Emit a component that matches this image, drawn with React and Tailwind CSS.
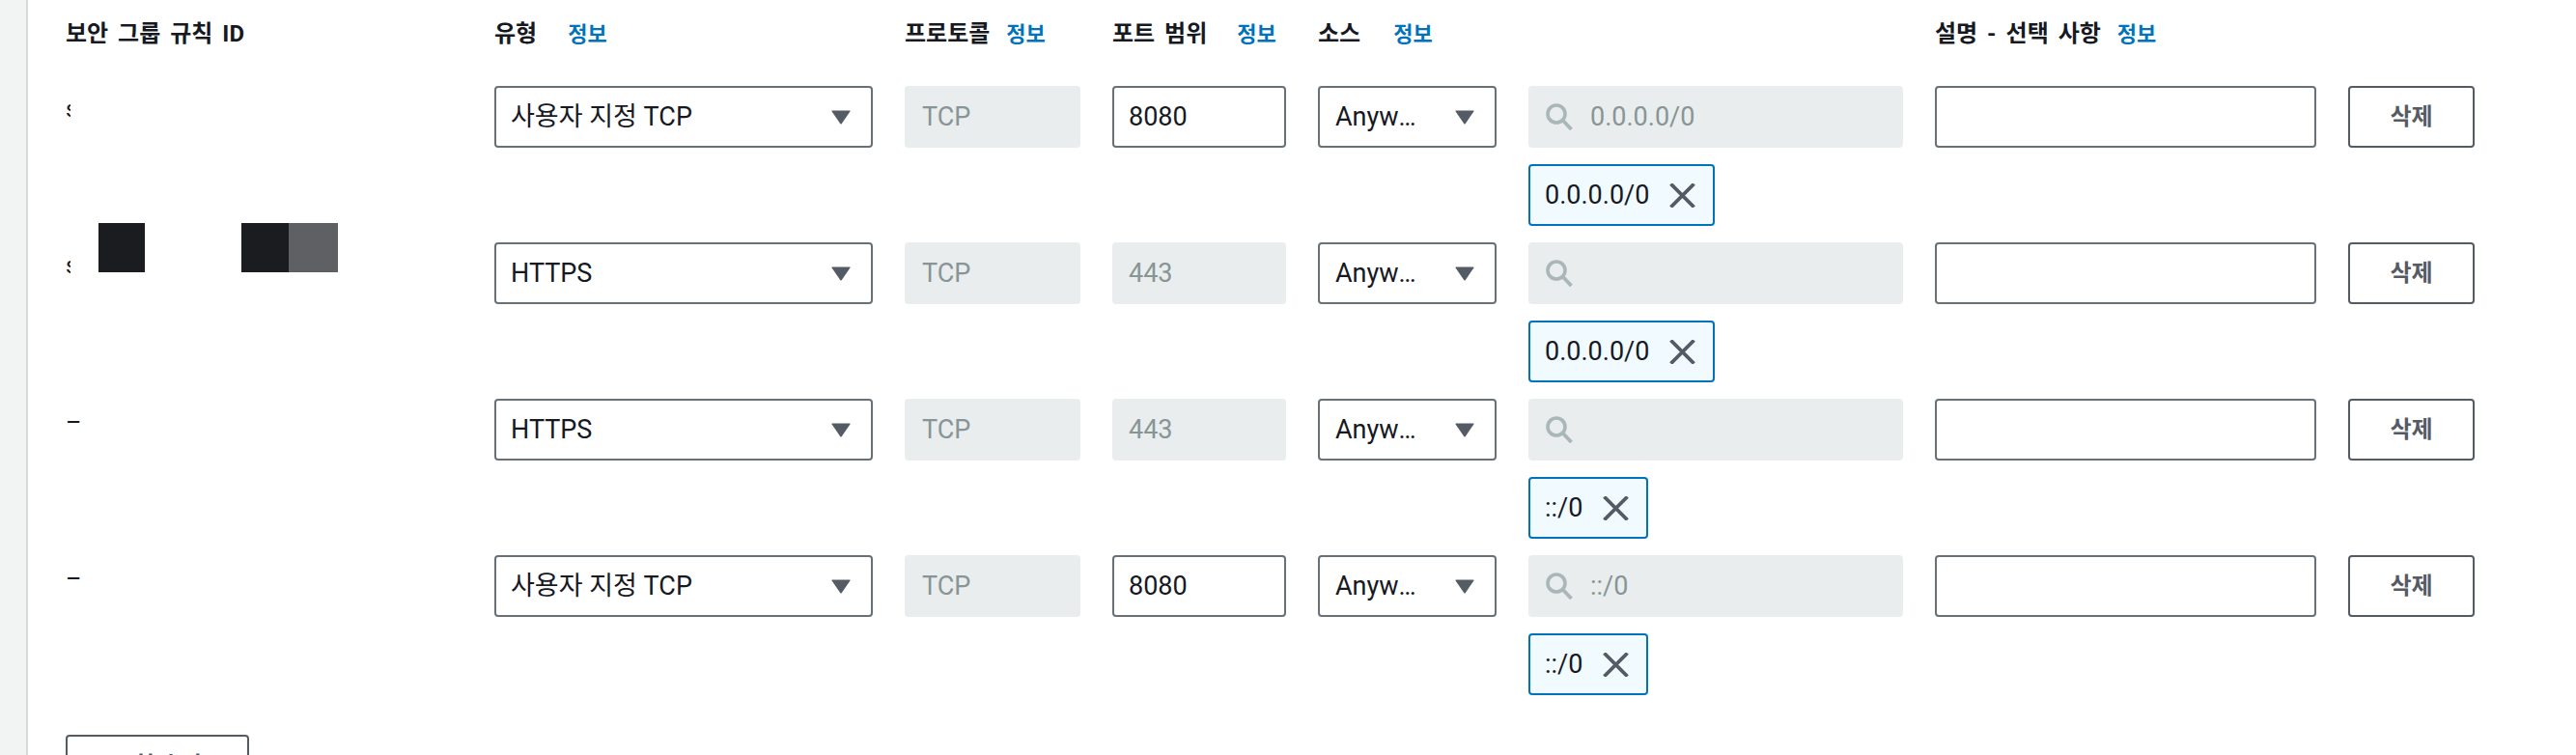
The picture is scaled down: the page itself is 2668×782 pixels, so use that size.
import React from 'react';

const rules = [
  { id: 'sliver', type: '사용자 지정 TCP', port: '8080', portEditable: true, source: 'Anywhere-IPv4', search: '0.0.0.0/0', chip: '0.0.0.0/0' },
  { id: 'redacted', type: 'HTTPS', port: '443', portEditable: false, source: 'Anywhere-IPv4', search: '', chip: '0.0.0.0/0' },
  { id: 'dash', type: 'HTTPS', port: '443', portEditable: false, source: 'Anywhere-IPv6', search: '', chip: '::/0' },
  { id: 'dash', type: '사용자 지정 TCP', port: '8080', portEditable: true, source: 'Anywhere-IPv6', search: '::/0', chip: '::/0' },
];

const Caret = () => (
  <svg width="20" height="15" viewBox="0 0 20 15" className="shrink-0">
    <path d="M1 0.5 H19 Q20 0.5 19.4 1.5 L10.8 14 Q10 15 9.2 14 L0.6 1.5 Q0 0.5 1 0.5 Z" fill="#545b64" />
  </svg>
);

const SearchIcon = () => (
  <svg width="30" height="28" viewBox="0 0 30 28" className="shrink-0">
    <circle cx="12" cy="11" r="9" fill="none" stroke="#aab7b8" strokeWidth="3.6" />
    <path d="M18.5 17.5 L27.5 27" stroke="#aab7b8" strokeWidth="3.8" />
  </svg>
);

const CloseIcon = () => (
  <svg width="27" height="25" viewBox="0 0 27 25" className="shrink-0">
    <path d="M1.5 0.5 L25.5 24.5 M25.5 0.5 L1.5 24.5" stroke="#545b64" strokeWidth="3.8" />
  </svg>
);

const Header = ({ label, gap }) => (
  <div className="flex items-baseline whitespace-nowrap">
    <span className="text-[24px] font-bold text-[#16191f] [word-spacing:4px]">{label}</span>
    {gap != null && (
      <span className={`text-[22px] font-bold text-[#0073bb] ${gap}`}>정보</span>
    )}
  </div>
);

const IdCell = ({ kind }) => {
  if (kind === 'dash') {
    return <div className="pt-[7px] text-[25px] leading-[36px] text-[#16191f]">–</div>;
  }
  return (
    <div className="relative pt-[6px] text-[24px] leading-[36px] text-[#16191f]">
      <div className="w-[5px] overflow-hidden">s</div>
      {kind === 'redacted' && (
        <>
          <div className="absolute left-[34px] top-[-20px] h-[51px] w-[48px] bg-[#1b1c20]" />
          <div className="absolute left-[182px] top-[-20px] flex h-[51px]">
            <div className="w-[49px] bg-[#1b1c20]" />
            <div className="w-[51px] bg-[#5f6064]" />
          </div>
        </>
      )}
    </div>
  );
};

const RuleRow = ({ rule }) => (
  <div className="grid grid-cols-[411px_392px_182px_180px_185px_388px_395px_131px] gap-x-[33px] items-start">
    <IdCell kind={rule.id} />

    <div className="flex h-[64px] items-center justify-between rounded-[4px] border-2 border-[#687078] bg-white pl-[15px] pr-[21px] text-[27px] text-[#16191f]">
      <span>{rule.type}</span>
      <Caret />
    </div>

    <div className="flex h-[64px] items-center rounded-[4px] border-2 border-[#eaeded] bg-[#eaeded] pl-[16px] text-[27px] text-[#879596]">
      TCP
    </div>

    {rule.portEditable ? (
      <div className="flex h-[64px] items-center rounded-[4px] border-2 border-[#687078] bg-white pl-[15px] text-[27px] text-[#16191f]">
        {rule.port}
      </div>
    ) : (
      <div className="flex h-[64px] items-center rounded-[4px] border-2 border-[#eaeded] bg-[#eaeded] pl-[15px] text-[27px] text-[#879596]">
        {rule.port}
      </div>
    )}

    <div className="flex h-[64px] items-center justify-between rounded-[4px] border-2 border-[#687078] bg-white pl-[16px] pr-[21px] text-[27px] text-[#16191f]">
      <span className="w-[92px] truncate">{rule.source}</span>
      <Caret />
    </div>

    <div className="flex flex-col gap-[17px]">
      <div className="flex h-[64px] items-center gap-[17px] rounded-[4px] border-2 border-[#eaeded] bg-[#eaeded] pl-[15px] text-[27px] text-[#879596]">
        <SearchIcon />
        <span>{rule.search}</span>
      </div>
      <div>
        <div className="inline-flex h-[64px] items-center gap-[21px] rounded-[4px] border-2 border-[#0073bb] bg-[#f1faff] pl-[15px] pr-[18px] text-[27px] text-[#16191f]">
          <span>{rule.chip}</span>
          <CloseIcon />
        </div>
      </div>
    </div>

    <div className="h-[64px] rounded-[4px] border-2 border-[#687078] bg-white" />

    <button className="flex h-[64px] items-center justify-center rounded-[4px] border-2 border-[#545b64] bg-white text-[24px] font-bold text-[#545b64]">
      삭제
    </button>
  </div>
);

export default function App() {
  return (
    <div className="flex h-[782px] overflow-hidden bg-white font-[Roboto,'Noto_Sans_CJK_KR',sans-serif]">
      <div className="w-[29px] shrink-0 border-r-2 border-[#d5dbdb] bg-[#f2f3f3]" />

      <div className="flex-1 pl-[39px] pt-[18px]">
        <div className="grid grid-cols-[411px_392px_182px_180px_185px_388px_395px_131px] gap-x-[33px] leading-[34px]">
          <Header label="보안 그룹 규칙 ID" />
          <Header label="유형" gap="ml-[32px]" />
          <Header label="프로토콜" gap="ml-[17px]" />
          <Header label="포트 범위" gap="ml-[31px]" />
          <Header label="소스" gap="ml-[34px]" />
          <div />
          <Header label="설명 - 선택 사항" gap="ml-[17px]" />
          <div />
        </div>

        <div className="mt-[36px] flex flex-col gap-[17px]">
          {rules.map((rule, index) => (
            <RuleRow key={index} rule={rule} />
          ))}
        </div>

        <button className="mt-[41px] flex h-[64px] w-[190px] items-center justify-center rounded-[4px] border-2 border-[#545b64] bg-white text-[24px] font-bold text-[#545b64]">
          규칙 추가
        </button>
      </div>
    </div>
  );
}
